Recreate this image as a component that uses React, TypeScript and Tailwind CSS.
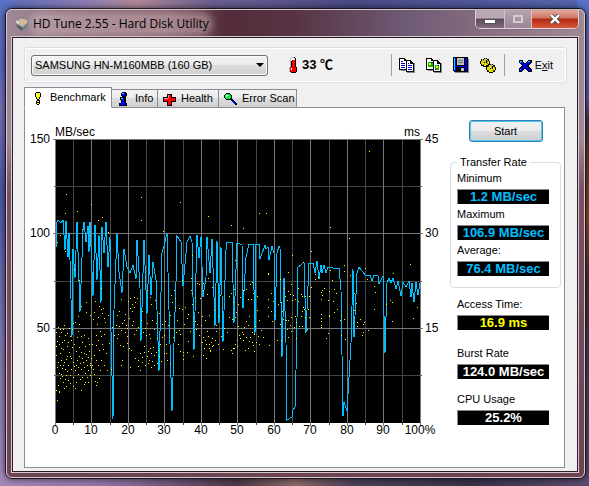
import { useState, type ReactNode } from "react";

// transfer rate, [x, y] inside the 365x284 plot
const transfer =
	"1,109 2,83 3,81 6,84 8,81 10,111 11,82 13,118 14,94 15,121 17,198 18,110 20,139 22,83 25,173 28,91 29,83 31,103 33,87 34,113 35,83 38,157 40,86 42,141 44,96 46,164 47,88 49,114 51,83 53,128 55,98 56,192 58,280 59,171 62,95 64,133 67,154 69,110 72,128 75,134 78,126 81,140 82,101 85,149 86,202 89,101 92,175 94,116 96,156 98,123 101,141 104,232 107,114 109,107 112,94 114,171 117,272 119,204 121,143 122,97 126,103 128,147 132,103 135,97 137,103 139,211 142,96 144,119 146,98 148,158 151,138 152,98 155,134 157,100 160,187 162,102 164,184 166,108 168,203 171,111 172,103 177,103 179,184 182,104 183,104 187,106 188,169 191,118 194,105 198,105 200,195 201,105 204,105 205,120 210,106 211,110 213,108 214,121 217,107 219,114 220,182 222,114 224,107 225,109 227,218 229,139 231,204 232,281 237,278 238,271 240,268 241,231 243,128 246,126 249,123 251,194 254,124 258,124 260,134 262,122 264,140 266,126 267,134 269,126 271,134 273,128 278,129 284,129 286,151 287,216 288,277 289,263 292,272 294,238 296,204 298,130 299,198 302,134 304,128 307,132 308,133 311,137 315,136 317,142 319,136 323,137 324,145 328,137 330,214 332,144 334,139 336,144 338,139 341,150 343,142 346,157 348,143 351,148 354,142 356,158 357,144 359,163 361,143 363,156 365,144";

// access time samples
const samples =
	"11,55 22,72 36,65 43,81 47,78 10,74 5,96 2,103 10,112 27,90 53,93 86,58 86,81 125,63 108,92 153,77 176,86 188,89 204,74 211,74 275,88 293,-5 314,12 294,99 355,125 256,112 237,116 19,130 24,141 46,149 80,135 137,116 180,121 213,134 233,133 225,140 275,131 289,126 289,132 310,129 338,134 312,140 295,136 248,123 " +
	"3,188 5,190 9,186 6,193 10,196 14,189 18,184 20,183 26,167 31,173 31,163 23,177 24,185 40,162 44,167 46,170 48,169 39,173 47,174 49,179 43,178 2,202 4,205 13,203 16,201 22,198 26,197 8,210 12,207 5,214 19,205 27,203 33,199 37,205 41,196 45,192 46,197 43,201 49,195 41,206 47,205 59,196 57,188 " +
	"1,216 3,223 6,221 8,226 11,220 7,229 10,230 4,234 6,235 12,232 15,236 20,231 18,223 24,217 21,226 23,228 29,214 31,221 27,219 34,212 30,207 29,228 26,230 32,226 36,219 39,216 41,221 44,211 43,226 46,221 49,226 48,210 38,230 5,239 8,243 3,246 9,249 13,241 18,238 21,243 25,240 29,245 32,238 35,236 40,242 1,251 4,252 11,247 20,249 26,251 30,243 42,243 44,239 41,246 2,261 4,253 56,230 52,231 " +
	"4,197 7,203 1,207 9,201 12,194 15,197 17,190 6,209 14,213 2,228 5,226 9,223 13,226 7,237 11,236 16,230 19,227 22,221 25,224 28,223 31,215 33,218 35,224 24,208 21,212 10,240 15,244 18,247 23,235 27,238 33,231 30,234 37,226 34,205 29,196 23,192 8,190 1,193 16,219 12,217 26,213 38,180 35,176 42,185 50,183 53,176 54,204 51,214 45,231 39,235 " +
	"66,160 73,162 75,159 79,158 75,169 77,165 79,168 80,163 77,172 82,159 69,181 67,184 64,187 66,191 61,186 72,189 77,186 81,191 79,195 72,197 63,195 65,206 68,207 74,209 72,204 76,211 80,219 85,214 83,221 89,207 91,196 94,195 90,189 95,199 89,213 92,217 96,214 98,208 94,221 97,222 101,213 103,211 90,226 93,224 87,223 96,228 102,224 99,226 85,231 83,227 66,226 67,221 75,228 105,205 107,198 109,196 107,185 110,182 101,184 99,190 104,174 100,161 96,165 92,151 95,158 87,172 86,181 " +
	"62,176 64,172 70,175 74,179 78,182 83,188 88,193 92,184 97,181 102,199 95,209 99,216 93,212 87,218 104,217 106,222 109,214 111,205 " +
	"111,214 112,221 115,224 118,198 119,190 121,193 115,176 120,168 124,169 120,159 127,170 119,151 127,141 136,139 117,163 124,191 125,195 129,185 132,179 133,175 123,205 125,212 128,216 132,213 133,202 128,220 138,217 128,213 137,165 136,151 142,144 144,145 137,154 140,158 148,144 153,139 157,148 148,151 152,155 145,159 143,173 140,182 142,185 147,177 144,196 148,198 152,192 147,203 150,201 153,197 157,199 151,205 154,205 149,209 154,209 156,203 148,216 155,212 158,206 157,207 151,219 155,211 160,201 " +
	"113,186 116,156 122,181 130,168 135,192 141,190 146,186 150,181 154,176 159,171 161,192 163,205 166,197 169,189 172,193 168,210 " +
	"165,156 163,177 161,186 174,157 176,154 179,150 178,163 174,178 177,180 180,178 183,165 181,173 183,187 185,158 188,151 184,196 180,205 178,209 176,211 179,209 182,201 185,199 188,201 187,193 189,188 191,182 193,186 194,177 196,160 191,150 193,160 198,154 202,157 195,145 197,143 191,198 195,198 194,202 197,203 199,195 201,203 203,197 206,191 200,187 193,209 198,206 204,205 199,212 208,198 202,171 204,181 197,193 188,195 190,211 182,207 177,214 " +
	"213,135 213,160 216,154 218,162 213,168 216,172 213,177 219,176 214,206 222,201 223,165 217,182 226,163 230,157 229,149 233,152 236,145 235,155 232,161 227,172 228,180 233,181 235,186 232,190 236,192 231,181 225,185 226,201 233,198 237,161 238,156 240,160 236,178 240,177 241,183 239,188 241,199 244,187 246,177 247,172 246,155 243,149 247,157 243,162 250,157 254,157 249,170 248,168 250,178 247,187 252,190 253,170 254,178 256,148 " +
	"260,135 260,140 263,138 267,151 266,153 266,160 267,156 269,149 274,152 273,161 277,141 279,150 278,162 281,154 279,173 282,170 286,176 285,181 289,180 274,177 266,175 266,179 266,182 266,188 266,186 271,199 273,194 290,200 274,176 286,196 302,183 305,180 309,183 308,185 302,187 308,193 313,191 307,196 320,153 319,147 319,170 335,161 337,163 337,182 358,179 362,168 331,165 299,154 301,164 299,171 69,290 70,193 71,186 62,199 35,226 33,243 36,228 17,208 15,217";

const dots = samples
	.split(" ")
	.map((p) => `M${p.replace(",", " ")}h1v1h-1z`)
	.join("");

const ticks = [0, 10, 20, 30, 40, 50, 60, 70, 80, 90];

function Chart() {
	return (
		<svg
			viewBox="0 0 425 359"
			className="block w-full h-auto text-[12px] font-['Liberation_Sans',Arial,sans-serif]"
			role="img"
			aria-label="Transfer rate and access time"
		>
			<g transform="translate(30 31)">
				<rect width="366" height="284" shapeRendering="crispEdges" />
				<g shapeRendering="crispEdges" fill="#454545">
					{ticks.map((t, i) => (
						<rect key={t} x={Math.round(i * 36.5 + 18)} width="1" height="286" />
					))}
					<rect x="-1" y="47" width="368" height="1" />
					<rect x="-1" y="142" width="368" height="1" />
					<rect x="-1" y="236" width="368" height="1" />
				</g>
				<g shapeRendering="crispEdges" fill="#777777">
					{[...ticks, 100].map((t) => (
						<rect key={t} x={Math.floor(t * 3.65)} width="1" height="287" />
					))}
					<rect x="-2" y="0" width="370" height="1" />
					<rect x="-2" y="94" width="370" height="1" />
					<rect x="-2" y="189" width="370" height="1" />
				</g>
				<polyline
					points={transfer}
					fill="none"
					stroke="#00bfff"
					strokeWidth="1"
					shapeRendering="crispEdges"
				/>
				<path d={dots} fill="#ffff00" shapeRendering="crispEdges" />
				<text x="0" y="-3">MB/sec</text>
				<text x="365" y="-3" textAnchor="end">ms</text>
				<g textAnchor="end">
					<text x="-5" y="4">150</text>
					<text x="-5" y="98">100</text>
					<text x="-5" y="193">50</text>
				</g>
				<text x="370" y="4">45</text>
				<text x="370" y="98">30</text>
				<text x="370" y="193">15</text>
				<g textAnchor="middle">
					{ticks.map((t) => (
						<text key={t} x={Math.floor(t * 3.65)} y="295">
							{t}
						</text>
					))}
					<text x="365" y="295">100%</text>
				</g>
			</g>
		</svg>
	);
}

function Icon({ children, className = "" }: { children: ReactNode; className?: string }) {
	return (
		<svg
			viewBox="0 0 16 16"
			className={`w-4 h-4 shrink-0 ${className}`}
			shapeRendering="crispEdges"
			aria-hidden="true"
		>
			{children}
		</svg>
	);
}

function BulbIcon() {
	return (
		<Icon>
			<path fill="#000" d="M6 2h4v1h1v4h-1v2H9v1H7V9H6V7H5V3h1zM7 10h3v4H9v1H7v-1H6v-3h1z" />
			<path fill="#ff0" d="M6 3h4v4H9v2H7V7H6zM7 11h2v1H7zM7 13h2v1H7z" />
			<path fill="#fff" d="M6 3h1v3H6z" />
		</Icon>
	);
}

function InfoIcon() {
	return (
		<Icon>
			<path fill="#000" d="M7 1h4v1h1v3h-1v1H7V5H6V2h1zM5 6h6v6h1v3H4v-3h2V9H5z" />
			<path fill="#00f" d="M7 2h3v3H7zM6 7h3v5h2v2H5v-2h2V9H6z" />
			<path fill="#0ff" d="M7 2h2v1H7zM6 7h2v1H6z" />
		</Icon>
	);
}

function HealthIcon() {
	return (
		<Icon>
			<path fill="#000" d="M6 3h5v3h4v5h-4v4H6v-4H2V6h4z" />
			<path fill="#f00" d="M7 4h3v3h4v3h-4v4H7v-4H3V7h4z" />
			<path fill="#fff" d="M7 4h1v3H7zM3 7h4v1H3z" opacity=".6" />
		</Icon>
	);
}

function ScanIcon() {
	return (
		<Icon>
			<path fill="#000" d="M4 2h4v1h1v1h1v4h1v1h1v1h1v1h1v1h1v2h-2v-1h-1v-1h-1v-1h-1v-1H9V9H4V8H3V7H2V4h1V3h1z" />
			<path fill="#00f040" d="M4 3h4v1h1v3H8v1H4V7H3V4h1z" />
			<path fill="#fff" d="M4 4h2v1H5v1H4z" />
			<path fill="#00f" d="M9 9h2v1h1v1h1v1h1v1h-2v-1h-1v-1h-1v-1H9z" />
		</Icon>
	);
}

function CopyTextIcon() {
	return (
		<Icon>
			<path fill="#888" d="M2 12h5v2H2zM8 15h8v1H8zM15 6h1v10h-1z" />
			<path fill="#000" d="M0 1h6v1h1v1h1v10H0zM7 3h5v1h1v1h1v1h1v9H7z" />
			<path fill="#fff" d="M1 2h4v2h2v8H1zM8 4h3v3h3v7H8z" />
			<path fill="#0000c8" d="M2 4h2v1H2zM2 6h4v1H2zM2 8h4v1H2zM2 10h4v1H2zM9 6h1v1H9zM9 8h4v1H9zM9 10h4v1H9zM9 12h4v1H9z" />
		</Icon>
	);
}

function CopyImageIcon() {
	return (
		<Icon>
			<path fill="#888" d="M2 12h5v2H2zM8 15h8v1H8zM15 6h1v10h-1z" />
			<path fill="#000" d="M0 1h6v1h1v1h1v10H0zM7 3h5v1h1v1h1v1h1v9H7z" />
			<path fill="#fff" d="M1 2h4v2h2v8H1zM8 4h3v3h3v7H8z" />
			<path fill="#00c800" d="M2 5h5v5H2zM9 8h4v5H9z" />
			<path fill="#ff0" d="M3 6h2v2H3zM10 9h2v2h-2z" />
			<path fill="#00f" d="M5 5h2v1H5zM12 8h1v1h-1zM9 12h1v1H9z" />
			<path fill="#f00" d="M4 8h1v1H4zM11 11h1v1h-1z" />
		</Icon>
	);
}

function SaveIcon() {
	return (
		<Icon>
			<path fill="#888" d="M2 15h14v1H2zM15 2h1v14h-1z" />
			<path fill="#000" d="M0 0h15v15H1v-1H0z" />
			<path fill="#0000e0" d="M1 1h13v13H1z" />
			<path fill="#00e0ff" d="M1 1h1v12H1z" />
			<path fill="#000" d="M3 1h9v8H3zM3 10h9v4H3z" />
			<path fill="#c0c0c0" d="M4 1h7v7H4zM8 11h3v3H8z" />
			<path fill="#777" d="M5 3h5v1H5zM5 5h5v1H5z" />
		</Icon>
	);
}

function GearsIcon() {
	return (
		<Icon>
			<path fill="#000" d="M4 1h3v1h2v2h1v3h3v1h2v2h1v3h-1v2h-2v1H9v-1H7v-2H6v-3H3V9H1V7H0V4h1V2h3z" />
			<path fill="#e8dc00" d="M2 2h1v1h1V2h3v1h1v1h1v3H8v1H6v1H4V8H2V7H1V4h1zM9 8h4v1h1v1h1v3h-1v1h-1v1H9v-1H8v-1H7v-3h1V9h1z" />
			<path fill="#6b6500" d="M1 4h1v1H1zM3 3h1v1H3zM7 4h1v1H7zM3 7h1v1H3zM7 6h1v1H7zM8 9h1v1H8zM13 9h1v1h-1zM8 13h1v1H8zM13 13h1v1h-1z" />
			<path fill="#000" d="M4 5h1v1H4zM6 3h1v3H6zM10 11h1v1h-1zM12 9h1v3h-1z" />
			<path fill="#b0b0b0" d="M5 1h1v5H5zM11 7h1v5h-1z" />
		</Icon>
	);
}

function ExitIcon() {
	return (
		<Icon>
			<path fill="#000" d="M2 3h4v2h1v1h2V5h1V4h1V3h4v3h-1v1h-1v1h-1v2h1v1h1v1h1v3h-4v-1h-1v-1H9v-1H7v1H6v1H5v1H2v-4h1v-1h1v-1h1V8H4V7H3V6H2z" />
			<path fill="#0000f0" d="M3 4h2v1h1v1h1v1h2V6h1V5h1V4h2v2h-1v1h-1v1h-1v2h1v1h1v1h1v2h-2v-1h-1v-1H9v-1H7v1H6v1H5v1H3v-2h1v-1h1v-1h1V8H5V7H4V6H3z" />
			<path fill="#00d0ff" d="M3 4h2v1H4v1H3zM11 4h2v1h-2zM3 12h1v1H3z" />
		</Icon>
	);
}

function Thermometer() {
	return (
		<svg viewBox="0 0 10 18" className="w-[10px] h-[18px]" shapeRendering="crispEdges" aria-hidden="true">
			<path fill="#000" d="M4 1h3v1h1v9h1v5H8v1H3v-1H2v-1h1V2h1z" />
			<path fill="#bbb" d="M3 1h3v1H3zM2 2h1v9H2zM1 11h1v5H1z" />
			<path fill="#fff" d="M3 2h4v3H3z" />
			<path fill="#f00" d="M4 4h3v7h1v5H3v-1H2v-4h2z" />
			<path fill="#fff" d="M3 12h1v2H3z" />
		</svg>
	);
}

const tabs = [
	{ name: "Benchmark", icon: <BulbIcon />, width: "w-[88px]" },
	{ name: "Info", icon: <InfoIcon />, width: "w-[46px]" },
	{ name: "Health", icon: <HealthIcon />, width: "w-[61px]" },
	{ name: "Error Scan", icon: <ScanIcon />, width: "w-[78px]" },
];

function Reading({
	label,
	value,
	color = "text-white",
	className = "",
}: {
	label: string;
	value: string;
	color?: string;
	className?: string;
}) {
	return (
		<dl className={className}>
			<dt className="h-4 leading-4 whitespace-nowrap">{label}</dt>
			<dd
				className={`mt-[3px] h-[15px] leading-[14px] bg-black border-t border-l border-[#888] text-center font-bold text-[13px] whitespace-nowrap ${color}`}
			>
				{value}
			</dd>
		</dl>
	);
}

export default function App() {
	const [tab, setTab] = useState("Benchmark");

	return (
		<div className="relative isolate min-h-screen pt-2 pl-[5px] pr-[3px] pb-2 text-black text-[11px] font-['Liberation_Sans',Arial,sans-serif] bg-[linear-gradient(90deg,#5a6cba_0%,#8a7cb4_14%,#b08898_23%,#6b5f90_36%,#4a4a86_60%,#5566b0_100%)]">
			{/* wallpaper showing around the window */}
			<div className="absolute -z-10 left-0 inset-y-0 w-3 bg-[linear-gradient(#5a70c4_0%,#5a66c0_14%,#7a70b8_22%,#4a58a8_40%,#8078b4_70%,#a488b8_100%)]" />
			<div className="absolute -z-10 right-0 inset-y-0 w-3 bg-[linear-gradient(#5a72c8_0%,#5060b0_20%,#40344c_25%,#6a3c20_33%,#8a4c28_45%,#4a3038_58%,#4c4060_75%,#5c4c70_100%)]" />
			<div className="absolute -z-10 inset-x-0 bottom-0 h-4 bg-[linear-gradient(90deg,#a488b8_0%,#8f74a4_18%,#4a3848_40%,#8a6868_50%,#4a4058_60%,#3a3048_80%,#5c4c70_100%)]" />
			<div className="relative border border-[#1c1420] rounded-[7px] shadow-[0_0_6px_#000000aa] bg-[linear-gradient(180deg,transparent_0_130px,#7b5064_180px,#6d4350_100%),linear-gradient(90deg,#a08a98_0%,#8a6c78_12%,#845e68_28%,#522c3a_38%,#573444_50%,#705c76_70%,#8a7080_84%,#a08a96_100%)]">
				<div className="border border-[#d6c8d0] rounded-[6px] pl-1 pr-[5px] pb-1">
					<header className="h-[26px] flex items-start justify-between">
						<div className="flex items-center h-7 pl-[3px] gap-[3px]">
							<svg viewBox="0 0 16 16" className="w-4 h-4" aria-hidden="true">
								<path d="M1 8 7 1l8 4-1 6-6 4z" fill="#6f7d80" />
								<path d="m2 7 5-5 7 3-5 6z" fill="#b9c0bc" />
								<ellipse cx="9" cy="6" rx="4" ry="3" fill="#d9b890" />
								<path d="m1 9 7 3v3z" fill="#465858" />
								<path d="m2 4 3 2-2 2z" fill="#e8eeee" />
							</svg>
							<h1 className="whitespace-nowrap text-[12px] leading-4 font-['Open_Sans','Noto_Sans',sans-serif] rounded-full bg-[#e0c8cc]/40 shadow-[0_0_6px_4px_#e0c8cc66]">
								HD Tune 2.55 - Hard Disk Utility
							</h1>
						</div>
						<div className="flex h-[19px] border border-t-0 border-[#e0d4dc] rounded-b-[5px] overflow-hidden shadow-[0_0_1px_#222]">
							<button
								type="button"
								aria-label="Minimize"
								className="w-[28px] flex items-center justify-center bg-[linear-gradient(#b8a8b4_0_45%,#5c4858_50%,#806c7c)]"
							>
								<span className="w-[10px] h-[3px] mt-1 bg-white border border-[#555] box-content" />
							</button>
							<button
								type="button"
								aria-label="Maximize"
								disabled
								className="w-[27px] flex items-center justify-center border-l border-[#d0c0cc] bg-[linear-gradient(#b4a4b0,#9a8696)]"
							>
								<span className="w-[10px] h-2 border-2 border-[#d4cad2]" />
							</button>
							<button
								type="button"
								aria-label="Close"
								className="w-[47px] flex items-center justify-center border-l border-[#e8c0b8] bg-[linear-gradient(#e0a090_0_10%,#cc7460_45%,#b02810_50%,#d85838)]"
							>
								<svg viewBox="0 0 12 10" className="w-3 h-[10px]" aria-hidden="true">
									<path d="m2 1 8 8M10 1 2 9" stroke="#555" strokeWidth="4" />
									<path d="m2 1 8 8M10 1 2 9" stroke="#fff" strokeWidth="2.4" />
								</svg>
							</button>
						</div>
					</header>

					<main className="border border-[#d6c8d0]">
						<div className="border border-[#2c1c26] bg-[#f0f0f0] pt-[9px] pl-[11px] pr-[10px] pb-[3px]">
							<div className="flex items-center h-[36px] border border-[#d5dfe5] rounded-[3px] shadow-[inset_0_0_0_1px_#fff] pl-[6px] pr-[13px]">
								<select
									aria-label="Drive"
									className="appearance-none w-[237px] h-[21px] pl-[3px] leading-[17px] border border-[#707070] rounded-[3px] bg-[linear-gradient(#f2f2f2,#ebebeb_50%,#dddddd_50%,#cfcfcf)] shadow-[inset_0_0_0_1px_#fafafa]"
								>
									<option>SAMSUNG HN-M160MBB (160 GB)</option>
								</select>
								<span className="-ml-3 w-0 h-0 border-x-4 border-x-transparent border-t-4 border-t-black pointer-events-none" />
								<div className="flex items-center gap-1 ml-[24px]">
									<Thermometer />
									<b className="text-[13px] whitespace-nowrap font-['Liberation_Sans','Noto_Sans_CJK_JP',sans-serif]">
										33 ℃
									</b>
								</div>
								<div className="flex items-center ml-auto">
									<span className="w-px h-[22px] mr-[7px] bg-[#a0a0a0]" />
									<div className="flex gap-[11px]">
										<button type="button" aria-label="Copy text"><CopyTextIcon /></button>
										<button type="button" aria-label="Copy screenshot"><CopyImageIcon /></button>
										<button type="button" aria-label="Save screenshot"><SaveIcon /></button>
										<button type="button" aria-label="Options"><GearsIcon /></button>
									</div>
									<span className="w-px h-[22px] ml-2 mr-3 bg-[#a0a0a0]" />
									<button type="button" className="flex items-center gap-[2px]">
										<ExitIcon />
										<span>E<u>x</u>it</span>
									</button>
								</div>
							</div>

							<div role="tablist" className="flex items-end h-[22px] mt-[3px] -mb-px">
								{tabs.map((t) => (
									<button
										key={t.name}
										type="button"
										role="tab"
										aria-selected={tab === t.name}
										onClick={() => setTab(t.name)}
										className={`flex items-center whitespace-nowrap border border-[#8c8c98] ${t.width} ${
											tab === t.name
												? "h-[21px] pl-[5px] gap-1 bg-white border-b-white z-10"
												: "h-[19px] pl-[3px] gap-1 border-l-0 bg-[linear-gradient(#f2f2f2,#ebebeb_50%,#dddddd_50%,#cfcfcf)]"
										}`}
									>
										{t.icon}
										{t.name}
									</button>
								))}
							</div>

							<section className="flex mr-[2px] border border-[#8c8c98] bg-white">
								<div className="flex-1 min-w-0">
									<Chart />
								</div>
								<aside className="w-[114px] shrink-0 pt-3 pr-[3px]">
									<button
										type="button"
										className="block mx-auto w-[74px] h-[22px] rounded-[3px] border border-[#3c7fb1] shadow-[inset_0_0_0_1px_#48c8f0] bg-[linear-gradient(#f2f2f2,#ebebeb_50%,#dddddd_50%,#cfcfcf)]"
									>
										Start
									</button>
									<fieldset className="mt-3 pl-[6px] pr-[11px] pb-[11px] border border-[#d5dfe5] rounded-[4px]">
										<legend className="h-4 leading-4 px-[3px] whitespace-nowrap">Transfer Rate</legend>
										<Reading label="Minimum" value="1.2 MB/sec" color="text-[#00bfff]" />
										<Reading label="Maximum" value="106.9 MB/sec" color="text-[#00bfff]" className="mt-[2px]" />
										<Reading label="Average:" value="76.4 MB/sec" color="text-[#00bfff]" className="mt-[2px]" />
									</fieldset>
									<div className="pl-[7px] pr-3">
										<Reading label="Access Time:" value="16.9 ms" color="text-[#ffff00]" className="mt-2" />
										<Reading label="Burst Rate" value="124.0 MB/sec" className="mt-[15px]" />
										<Reading label="CPU Usage" value="25.2%" className="mt-3" />
									</div>
								</aside>
							</section>
						</div>
					</main>
				</div>
			</div>
		</div>
	);
}
